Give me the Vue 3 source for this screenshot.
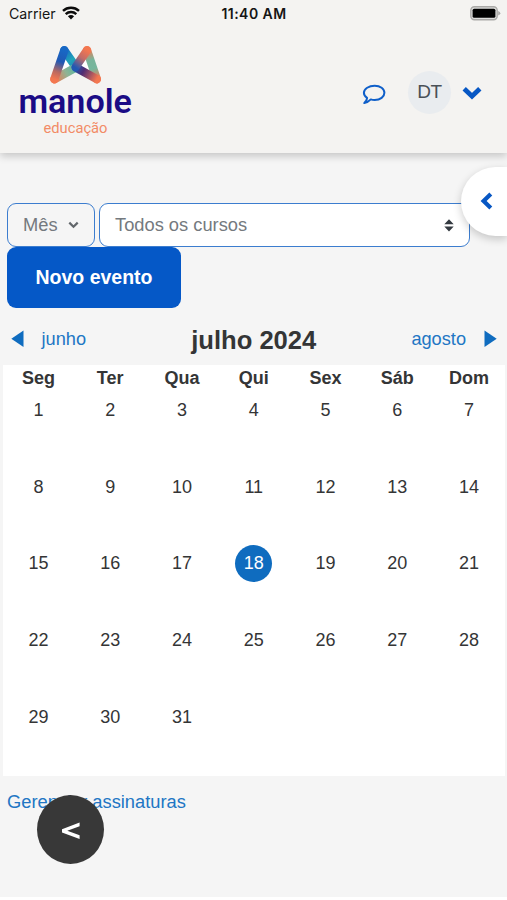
<script setup>
import { computed, ref } from 'vue'

const weekdays = ['Seg', 'Ter', 'Qua', 'Qui', 'Sex', 'Sáb', 'Dom']
const daysInMonth = 31
const today = ref(18)

// 5 semanas de 7 dias, as células depois do dia 31 ficam vazias
const weeks = computed(() => {
  const rows = []
  for (let start = 1; start <= daysInMonth; start += 7) {
    const row = []
    for (let i = 0; i < 7; i++) {
      const day = start + i
      row.push(day <= daysInMonth ? day : null)
    }
    rows.push(row)
  }
  return rows
})
</script>

<template>
  <div class="page">
    <header class="header">
      <div class="status-bar">
        <div class="carrier">
          <span>Carrier</span>
          <svg width="18" height="14" viewBox="0 0 18 14">
            <g fill="none" stroke="#0b0b0b" stroke-width="2.4">
              <path d="M1 4.9C5.5.7 12.5.7 17 4.9" />
              <path d="M3.7 8.1C6.7 5.3 11.3 5.3 14.3 8.1" />
            </g>
            <path d="M5.9 10.2Q9 7.6 12.1 10.2L9 13.4Z" fill="#0b0b0b" />
          </svg>
        </div>
        <span class="clock">11:40 AM</span>
        <svg class="battery" width="31" height="15" viewBox="0 0 31 15">
          <rect x="0.8" y="0.8" width="26.4" height="12.9" rx="3.6" fill="#dededc" stroke="#aaa9a7" stroke-width="1.4" />
          <rect x="2.6" y="2.7" width="22.8" height="9.1" rx="1.6" fill="#000" />
          <path d="M28.2 5V9.6Q30.3 8.8 30.3 7.3T28.2 5Z" fill="#aaa9a7" />
        </svg>
      </div>

      <div class="nav">
        <svg class="logo" width="120" height="100" viewBox="0 0 120 100">
          <defs>
            <linearGradient id="legLeft" gradientUnits="userSpaceOnUse" x1="46" y1="8" x2="36" y2="37">
              <stop offset="0" stop-color="#1768c5" />
              <stop offset="0.4" stop-color="#2158b4" />
              <stop offset="0.75" stop-color="#b96960" />
              <stop offset="1" stop-color="#f37750" />
            </linearGradient>
            <linearGradient id="innerLeft" gradientUnits="userSpaceOnUse" x1="46" y1="8" x2="58" y2="25">
              <stop offset="0" stop-color="#1768c5" />
              <stop offset="0.6" stop-color="#20a5b9" />
              <stop offset="1" stop-color="#2386b8" />
            </linearGradient>
            <linearGradient id="baseLeft" gradientUnits="userSpaceOnUse" x1="36" y1="37" x2="58" y2="25">
              <stop offset="0" stop-color="#f37750" />
              <stop offset="0.55" stop-color="#8fb394" />
              <stop offset="1" stop-color="#58b8a3" />
            </linearGradient>
            <linearGradient id="innerRight" gradientUnits="userSpaceOnUse" x1="69" y1="8" x2="57" y2="25">
              <stop offset="0" stop-color="#f37750" />
              <stop offset="0.45" stop-color="#c36c67" />
              <stop offset="1" stop-color="#2258b2" />
            </linearGradient>
            <linearGradient id="legRight" gradientUnits="userSpaceOnUse" x1="69" y1="8" x2="79" y2="37">
              <stop offset="0" stop-color="#f37750" />
              <stop offset="0.35" stop-color="#78b49b" />
              <stop offset="0.65" stop-color="#76b69d" />
              <stop offset="1" stop-color="#f37750" />
            </linearGradient>
            <linearGradient id="baseRight" gradientUnits="userSpaceOnUse" x1="58" y1="25" x2="79" y2="37">
              <stop offset="0" stop-color="#2258b2" />
              <stop offset="0.35" stop-color="#502c73" />
              <stop offset="1" stop-color="#f37750" />
            </linearGradient>
          </defs>
          <path d="M40 33L46 13L57 26Z M75 33L69 13L58 26Z" fill="#fff" />
          <g fill="none" stroke-width="8.4" stroke-linecap="round">
            <path d="M46.3 8.3L57.8 25" stroke="url(#innerLeft)" />
            <path d="M36.4 37.2L57.8 25.5" stroke="url(#baseLeft)" />
            <path d="M46.3 8.3L36.4 37.2" stroke="url(#legLeft)" />
            <path d="M69 8.3L78.8 37.2" stroke="url(#legRight)" />
            <path d="M57.8 25.5L78.8 37.2" stroke="url(#baseRight)" />
            <path d="M69 8.3L57.6 25" stroke="url(#innerRight)" />
          </g>
          <text class="logo-name" x="0.4" y="71" textLength="113.6" lengthAdjust="spacingAndGlyphs">manole</text>
          <text class="logo-sub" x="25.5" y="91" textLength="64" lengthAdjust="spacingAndGlyphs">educação</text>
        </svg>

        <div class="user-menu">
          <svg class="chat" width="24" height="21" viewBox="0 0 24 21">
            <path
              d="M12.7 1.7C18.3 1.7 22.4 4.8 22.4 8.8S18.3 16 12.7 16C11.2 16 9.9 15.8 8.8 15.4C6.9 17.4 5 18.6 2.3 19C4 17.5 5 16 5.1 13.9C3 12.6 1.9 10.9 1.9 8.8C1.9 4.8 6.9 1.7 12.7 1.7Z"
              fill="none" stroke="#0f5fc9" stroke-width="2" stroke-linejoin="round" />
          </svg>
          <span class="avatar">DT</span>
          <svg class="caret" width="20" height="14" viewBox="0 0 20 14">
            <path d="M2.2 2.7L10 10.2L17.8 2.7" fill="none" stroke="#0757c4" stroke-width="4.8" stroke-linejoin="miter" />
          </svg>
        </div>
      </div>
    </header>

    <main class="content">
      <div class="filters">
        <button class="view-button">
          Mês
          <svg width="11" height="8" viewBox="0 0 11 8">
            <path d="M1.3 1.6L5.5 5.8L9.7 1.6" fill="none" stroke="#62676b" stroke-width="2.2" />
          </svg>
        </button>
        <div class="course-select">
          <span>Todos os cursos</span>
          <svg width="10" height="13" viewBox="0 0 10 13">
            <path d="M0.3 5.2L5 0.3L9.7 5.2Z M0.3 7.5H9.7L5 12.4Z" fill="#343a40" />
          </svg>
        </div>
      </div>
      <button class="new-event">Novo evento</button>

      <div class="month-nav">
        <a class="month-link">
          <svg width="13" height="18" viewBox="0 0 13 18"><path d="M12.5 0.4V17L0.3 8.7Z" fill="#0f6cbf" /></svg>
          <span>junho</span>
        </a>
        <h2>julho 2024</h2>
        <a class="month-link">
          <span>agosto</span>
          <svg width="13" height="18" viewBox="0 0 13 18"><path d="M0.5 0.4V17L12.7 8.7Z" fill="#0f6cbf" /></svg>
        </a>
      </div>

      <div class="calendar">
        <div class="week-head">
          <span v-for="name in weekdays" :key="name">{{ name }}</span>
        </div>
        <div v-for="(week, index) in weeks" :key="index" class="week">
          <div v-for="(day, i) in week" :key="i" class="day">
            <span v-if="day" :class="{ today: day === today }">{{ day }}</span>
          </div>
        </div>
      </div>

      <a class="manage">Gerenciar assinaturas</a>
    </main>

    <!-- botões flutuantes -->
    <button class="drawer-toggle">
      <svg width="13" height="20" viewBox="0 0 13 20">
        <path d="M10.8 1.9L3.6 8.9L10.8 15.9" fill="none" stroke="#0757c4" stroke-width="4.2" />
      </svg>
    </button>
    <button class="back-button">
      <svg width="20" height="18" viewBox="0 0 20 18">
        <path d="M18.6 0.6V4.3L6.3 8.7L18.6 13.3V17L1 10.4V7.2Z" fill="#fff" />
      </svg>
    </button>
  </div>
</template>

<style>
body {
  margin: 0;
  background: #fff;
}
</style>

<style scoped>
.page {
  position: relative;
  width: 507px;
  height: 897px;
  overflow: hidden;
  background: #f5f5f5;
  color: #343536;
  font-family: "Liberation Sans", Arial, sans-serif;
  font-size: 18px;
}

button {
  margin: 0;
  padding: 0;
  border: 0;
  font-family: inherit;
}

.header {
  box-sizing: border-box;
  height: 153px;
  background: #f4f3f1;
  box-shadow: 0 3px 8px rgba(0, 0, 0, 0.2);
}

.status-bar {
  display: grid;
  grid-template-columns: 1fr auto 1fr;
  align-items: center;
  box-sizing: border-box;
  height: 28px;
  padding: 0 6px 2px 9px;
  font-family: Inter, sans-serif;
  font-size: 14.2px;
  color: #151515;
}

.carrier {
  display: flex;
  align-items: center;
  gap: 6px;
}

.clock {
  margin-right: 2px;
  font-size: 14px;
  font-weight: 600;
  letter-spacing: 0.45px;
}

.battery {
  justify-self: end;
}

.nav {
  display: flex;
  justify-content: space-between;
  padding: 14px 25px 0 18px;
}

.logo {
  overflow: visible;
}

.logo-name {
  font-family: Roboto, sans-serif;
  font-size: 34px;
  font-weight: 600;
  fill: #1b0b85;
}

.logo-sub {
  font-family: Roboto, sans-serif;
  font-size: 14px;
  fill: #f28b66;
}

.user-menu {
  display: flex;
  align-items: center;
  height: 100px;
}

.chat {
  margin: 4px 22px 0 0;
}

.avatar {
  display: flex;
  align-items: center;
  justify-content: center;
  width: 43px;
  height: 43px;
  margin-right: 11px;
  border-radius: 50%;
  background: #e9ecef;
  color: #495057;
  font-size: 19px;
  letter-spacing: -0.4px;
}

.caret {
  margin-top: 2px;
}

.content {
  padding: 50px 2px 0 2.5px;
}

.filters {
  display: flex;
  gap: 4px;
  padding-left: 4.5px;
}

.view-button,
.course-select {
  display: flex;
  box-sizing: border-box;
  align-items: center;
  height: 44px;
  border: 1.5px solid #3c7dcf;
  border-radius: 9px;
  color: #74797e;
  font-size: 18.3px;
}

.view-button {
  width: 88px;
  gap: 10px;
  padding-left: 15px;
  background: #f5f5f5;
}

.course-select {
  justify-content: space-between;
  width: 371px;
  padding: 0 15px;
  background: #fff;
}

.new-event {
  display: block;
  width: 174px;
  height: 61px;
  margin-left: 4.5px;
  border-radius: 9px;
  background: #0558c7;
  color: #fff;
  font-size: 19.5px;
  font-weight: bold;
}

.month-nav {
  display: grid;
  grid-template-columns: 1fr auto 1fr;
  align-items: center;
  height: 57px;
  padding: 0 8px;
}

.month-nav h2 {
  margin: 6px 0 0;
  font-size: 25.6px;
  line-height: 30px;
}

.month-link {
  display: flex;
  align-items: center;
  gap: 18px;
  padding-top: 5px;
  color: #2176c4;
  font-size: 18.2px;
}

.month-link:last-child {
  justify-content: flex-end;
}

.calendar {
  height: 411px;
  background: #fff;
}

.week-head,
.week {
  display: grid;
  grid-template-columns: repeat(7, 1fr);
  text-align: center;
}

.week-head {
  height: 27px;
  font-weight: bold;
  line-height: 27px;
}

.week {
  height: 76.7px;
}

.day {
  display: flex;
  justify-content: center;
}

.day span {
  width: 37px;
  height: 37px;
  border-radius: 50%;
  line-height: 37px;
}

.day .today {
  background: #0f6cbf;
  color: #fff;
}

.manage {
  display: block;
  padding: 15px 0 0 4.5px;
  color: #2176c4;
  font-size: 18.3px;
}

.drawer-toggle {
  display: flex;
  position: absolute;
  top: 167px;
  right: 0;
  align-items: center;
  width: 46px;
  height: 69px;
  padding-left: 19px;
  border-radius: 35px 0 0 35px;
  background: #fff;
  box-shadow: 0 3px 8px rgba(0, 0, 0, 0.2);
}

.back-button {
  display: flex;
  position: absolute;
  top: 795px;
  left: 37px;
  align-items: center;
  justify-content: center;
  width: 67px;
  height: 69px;
  padding-top: 3px;
  border-radius: 50%;
  background: #383838;
}
</style>
